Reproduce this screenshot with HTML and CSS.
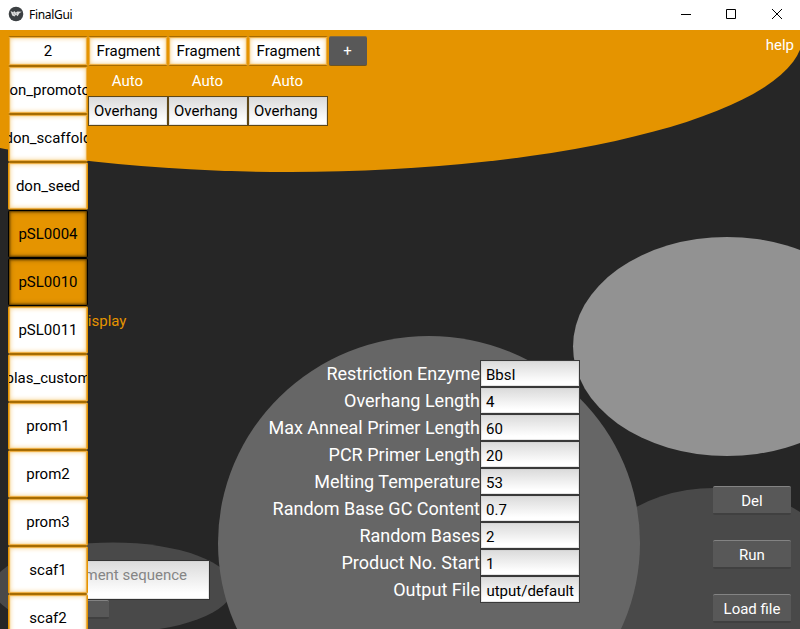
FILE: index.html
```html
<!DOCTYPE html>
<html lang="en">
<head>
<meta charset="utf-8">
<title>FinalGui</title>
<link rel="stylesheet" href="styles.css">
</head>
<body>
<header class="titlebar">
  <svg class="logo" viewBox="0 0 16 16"><circle cx="8" cy="8" r="7.3" fill="#3c4043"/><path d="M2.6 5 5.2 6.2 6.2 5.1 7.8 6.6 9.3 5.6 13.8 5.8 11.4 7.3 9.6 10.2 8 8.7 6.5 10.4 4.2 9.4Z" fill="#dedede"/><path d="M5.3 6.5 6.6 9.2M8 6.6 8.6 8.4" stroke="#84888b" stroke-width=".6"/></svg>
  <span class="title">FinalGui</span>
  <svg class="controls" viewBox="0 0 110 14" fill="none" stroke="#000"><path d="M1 7.5H11M46.5 2.5H55.5V11.5H46.5ZM92 2 102 12M102 2 92 12"/></svg>
</header>
<main class="stage">
  <svg class="backdrop" viewBox="0 30 800 599">
    <ellipse cx="290" cy="35" rx="513" ry="137" fill="#e59400"/>
    <ellipse cx="727" cy="346.5" rx="154" ry="109.5" fill="#929292"/>
    <ellipse cx="714" cy="598" rx="138" ry="110" fill="#494949"/>
    <ellipse cx="113" cy="587.5" rx="120" ry="45" fill="#494949"/>
    <ellipse cx="429" cy="543" rx="211" ry="207" fill="#666"/>
  </svg>
  <section class="top">
    <div class="pick">2</div>
    <div class="col"><div class="pick">Fragment</div><div class="auto">Auto</div><div class="field">Overhang</div></div>
    <div class="col"><div class="pick">Fragment</div><div class="auto">Auto</div><div class="field">Overhang</div></div>
    <div class="col"><div class="pick">Fragment</div><div class="auto">Auto</div><div class="field">Overhang</div></div>
    <div class="btn plus">+</div>
    <div class="help">help</div>
  </section>
  <section class="body">
    <div class="left">
      <div class="display">Display</div>
      <div class="field sequence">Fragment sequence</div>
      <div class="btn add"></div>
    </div>
    <div class="params">
      <div class="row"><label>Restriction Enzyme</label><div class="field">BbsI</div></div>
      <div class="row"><label>Overhang Length</label><div class="field">4</div></div>
      <div class="row"><label>Max Anneal Primer Length</label><div class="field">60</div></div>
      <div class="row"><label>PCR Primer Length</label><div class="field">20</div></div>
      <div class="row"><label>Melting Temperature</label><div class="field">53</div></div>
      <div class="row"><label>Random Base GC Content</label><div class="field">0.7</div></div>
      <div class="row"><label>Random Bases</label><div class="field">2</div></div>
      <div class="row"><label>Product No. Start</label><div class="field">1</div></div>
      <div class="row"><label>Output File</label><div class="field end"><span>output/default</span></div></div>
    </div>
    <div class="actions">
      <div class="btn">Del</div>
      <div class="btn">Run</div>
      <div class="btn">Load file</div>
    </div>
  </section>
  <nav class="menu">
    <div class="pick"><span>don_promotor</span></div>
    <div class="pick"><span>don_scaffold</span></div>
    <div class="pick"><span>don_seed</span></div>
    <div class="pick on"><span>pSL0004</span></div>
    <div class="pick on"><span>pSL0010</span></div>
    <div class="pick"><span>pSL0011</span></div>
    <div class="pick"><span>plas_custom</span></div>
    <div class="pick"><span>prom1</span></div>
    <div class="pick"><span>prom2</span></div>
    <div class="pick"><span>prom3</span></div>
    <div class="pick"><span>scaf1</span></div>
    <div class="pick"><span>scaf2</span></div>
  </nav>
</main>
</body>
</html>
```
FILE: styles.css
```css
* { box-sizing: border-box; }
body { margin: 0; width: 800px; height: 629px; overflow: hidden; display: flex; flex-direction: column; background: #262626; font: 15px/18px Roboto, sans-serif; color: #fff; }
.titlebar { height: 30px; flex: none; display: flex; align-items: center; padding: 0 10px 2px 8px; background: #fff; color: #000; }
.logo { width: 16px; height: 16px; margin-right: 5px; }
.title { font: 12px/16px "Noto Sans", sans-serif; padding-top: 2px; letter-spacing: -.3px; }
.controls { width: 110px; height: 14px; margin-left: auto; }
.stage { position: relative; flex: 1; min-height: 0; overflow: hidden; display: flex; flex-direction: column; }
.backdrop { position: absolute; inset: 0; width: 800px; height: 599px; }
.top, .body { position: relative; display: flex; }
.top { height: 96px; flex: none; padding: 6px 6px 0 8px; }
.col { width: 80px; }
.col .pick { padding-left: 1px; }
.pick { width: 80px; height: 30px; display: flex; align-items: center; justify-content: center; overflow: hidden; white-space: nowrap; color: #000; background: #fff; border: 1px solid #e59400; border-top-color: #a66c02; border-bottom-color: #a66c02; border-radius: 2px; box-shadow: inset 0 0 1px 1px #eba93a, inset 0 0 5px 1px #f6cf86; }
.auto { height: 30px; line-height: 30px; text-align: center; padding-right: 1px; }
.field { height: 30px; padding: 5px 5px 0; color: #000; white-space: nowrap; overflow: hidden; border: 1px solid #5e4717; background: linear-gradient(#dadada, #fff 85%); box-shadow: inset 0 0 0 1px #cfcfcf88; }
.btn { display: flex; align-items: center; justify-content: center; background: #585858; border-radius: 2px; border-top: 1px solid #838383; border-bottom: 2px solid #404040; }
.top .plus { width: 38px; height: 30px; margin-left: 1px; padding-right: 1px; border-top-color: #7d6a45; border-bottom: 1px solid #6b5424; }
.help { margin-left: auto; }
.body { flex: 1; min-height: 0; }
.left { width: 210px; padding: 186px 0 0 8px; }
.display { padding-left: 70px; color: #e59400; }
.left .sequence { width: 202px; height: 40px; margin-top: 230px; padding: 5px 0 0 46px; color: #858585; border-color: #333; }
.add { width: 101px; height: 19px; }
.params { width: 370px; padding-top: 234px; }
.row { height: 27px; display: flex; justify-content: flex-end; font-size: 18px; line-height: 27px; }
.row .field { width: 100px; height: 27px; font-size: 15px; line-height: 18px; border-color: #393939; }
.end span { display: flex; justify-content: flex-end; overflow: hidden; }
.actions { width: 78px; margin-left: 133px; padding-top: 360px; display: flex; flex-direction: column; gap: 25px; }
.actions .btn { height: 29px; flex: none; padding-top: 1px; }
.menu { position: absolute; left: 8px; top: 36px; }
.menu .pick { height: 48px; }
.menu .on { background: #e59400; border-color: #000; box-shadow: inset 0 0 2px 1px #5e3d00, inset 0 0 5px 1px #9b6400; }
```
